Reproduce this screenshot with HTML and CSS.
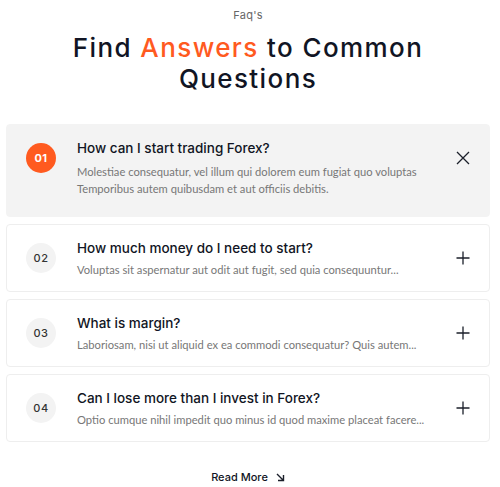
FILE: index.html
```html
<!DOCTYPE html>
<html>
<head>
<meta charset="utf-8">
<link rel="stylesheet" href="styles.css">
</head>
<body>
<section class="faq">
  <p class="eyebrow">Faq's</p>
  <h2 class="title">Find <span class="accent">Answers</span> to Common<br>Questions</h2>
  <div class="list">
    <div class="item open">
      <span class="num">01</span>
      <div class="content">
        <h3 class="q">How can I start trading Forex?</h3>
        <p class="a">Molestiae consequatur, vel illum qui dolorem eum fugiat quo voluptas Temporibus autem quibusdam et aut officiis debitis.</p>
      </div>
      <span class="icon"><svg width="14" height="14" viewBox="0 0 14 14"><path d="M1 1L13 13M13 1L1 13" stroke="#1b1f2a" stroke-width="1.3" fill="none"/></svg></span>
    </div>
    <div class="item">
      <span class="num">02</span>
      <div class="content">
        <h3 class="q">How much money do I need to start?</h3>
        <p class="a">Voluptas sit aspernatur aut odit aut fugit, sed quia consequuntur...</p>
      </div>
      <span class="icon"><svg width="14" height="14" viewBox="0 0 14 14"><path d="M7 0.5V13.5M0.5 7H13.5" stroke="#1b1f2a" stroke-width="1.3" fill="none"/></svg></span>
    </div>
    <div class="item">
      <span class="num">03</span>
      <div class="content">
        <h3 class="q">What is margin?</h3>
        <p class="a">Laboriosam, nisi ut aliquid ex ea commodi consequatur? Quis autem...</p>
      </div>
      <span class="icon"><svg width="14" height="14" viewBox="0 0 14 14"><path d="M7 0.5V13.5M0.5 7H13.5" stroke="#1b1f2a" stroke-width="1.3" fill="none"/></svg></span>
    </div>
    <div class="item">
      <span class="num">04</span>
      <div class="content">
        <h3 class="q">Can I lose more than I invest in Forex?</h3>
        <p class="a">Optio cumque nihil impedit quo minus id quod maxime placeat facere...</p>
      </div>
      <span class="icon"><svg width="14" height="14" viewBox="0 0 14 14"><path d="M7 0.5V13.5M0.5 7H13.5" stroke="#1b1f2a" stroke-width="1.3" fill="none"/></svg></span>
    </div>
  </div>
  <a class="more" href="#">Read More <svg width="9" height="9" viewBox="0 0 9 9"><path d="M1 1L7.5 7.5M2 7.5H7.5V2" stroke="#1b1f2a" stroke-width="1.4" fill="none"/></svg></a>
</section>
</body>
</html>
```
FILE: styles.css
```css
* { box-sizing: border-box; }
body {
  margin: 0;
  background: #fff;
  font-family: Lato, "Noto Sans", sans-serif;
}
.faq {
  width: 484px;
  margin-left: 6px;
  display: flex;
  flex-direction: column;
  align-items: center;
  padding-top: 8px;
}
.eyebrow {
  margin: 0;
  font-family: Inter, sans-serif;
  font-size: 11px;
  line-height: 14px;
  color: #666;
  letter-spacing: 0.3px;
}
.title {
  margin: 10px 0 0;
  font-family: Inter, sans-serif;
  font-weight: 500;
  font-size: 26px;
  line-height: 31px;
  letter-spacing: 1.4px;
  text-align: center;
  color: #111524;
}
.accent { color: #ff5a1f; }
.list {
  width: 100%;
  margin-top: 30px;
  display: flex;
  flex-direction: column;
  gap: 7px;
}
.item {
  display: flex;
  align-items: flex-start;
  padding: 14px 19px 13px 19px;
  border: 1px solid #eeeeee;
  border-radius: 4px;
  background: #fff;
}
.item.open {
  background: #f3f3f3;
  border-color: #f3f3f3;
  padding-bottom: 19px;
}
.num {
  flex: 0 0 30px;
  height: 30px;
  margin-top: 4px;
  border-radius: 50%;
  background: #f3f3f3;
  color: #333;
  font-family: Inter, sans-serif;
  font-size: 11px;
  font-weight: 500;
  letter-spacing: 0.5px;
  display: flex;
  align-items: center;
  justify-content: center;
}
.open .num { background: #ff5a1f; color: #fff; font-weight: 700; }
.content {
  flex: 1;
  margin-left: 21px;
}
.q {
  margin: 0;
  font-family: Inter, sans-serif;
  font-weight: 500;
  font-size: 13.5px;
  line-height: 18px;
  color: #111524;
}
.a {
  margin: 4px 0 0;
  font-size: 11.2px;
  line-height: 17px;
  color: #777;
  max-width: 350px;
}
.open .a { margin-top: 6px; }
.icon {
  flex: 0 0 14px;
  height: 14px;
  margin-top: 12px;
  display: flex;
}
.more {
  margin-top: 28px;
  font-family: Inter, sans-serif;
  font-size: 11px;
  font-weight: 500;
  color: #111524;
  text-decoration: none;
  display: flex;
  align-items: center;
  gap: 8px;
}
```
